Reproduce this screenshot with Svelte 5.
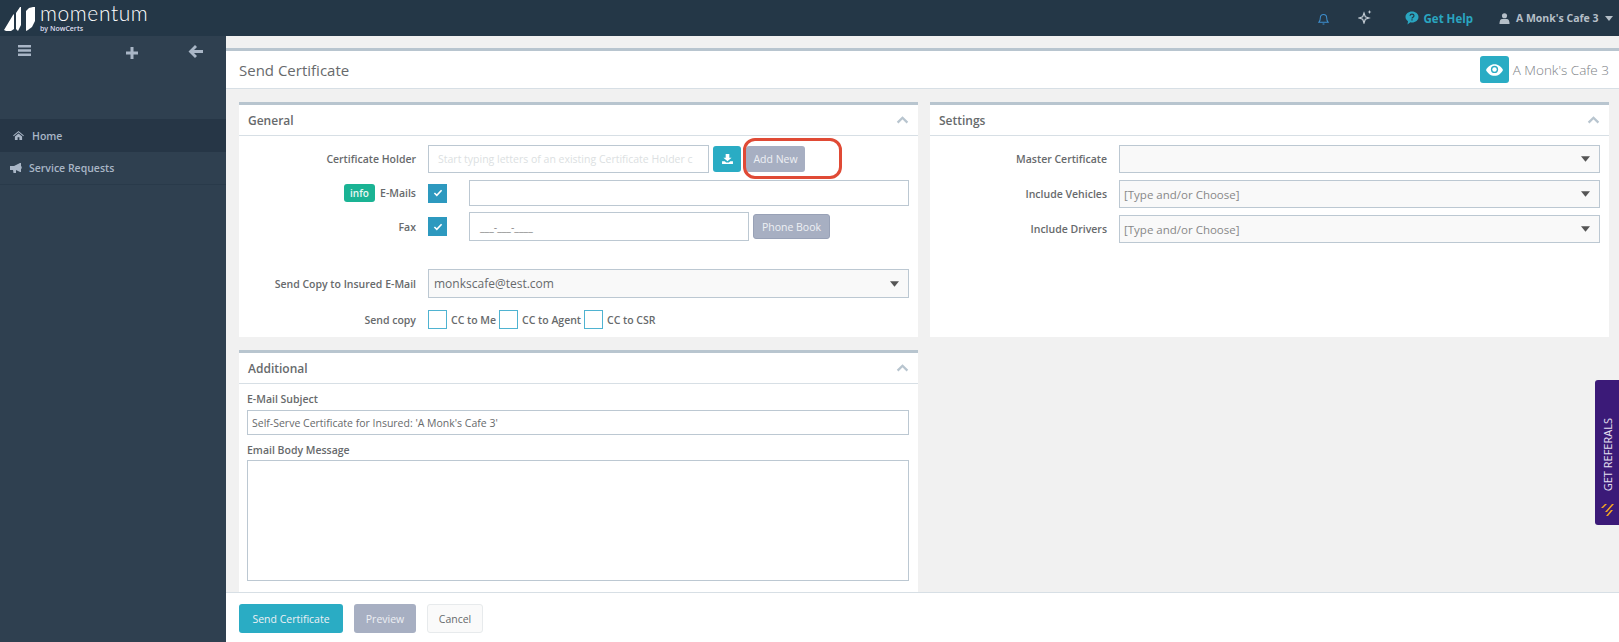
<script>
	const nav = [
		{ label: 'Home', icon: 'home', active: true },
		{ label: 'Service Requests', icon: 'bullhorn', active: false },
	]
	const settings = [
		{ label: 'Master Certificate', value: '' },
		{ label: 'Include Vehicles', value: '[Type and/or Choose]' },
		{ label: 'Include Drivers', value: '[Type and/or Choose]' },
	]
	const copies = ['CC to Me', 'CC to Agent', 'CC to CSR']
</script>

{#snippet caret()}
	<svg class="caret" viewBox="0 0 10 6" width="9" height="6"><path d="M0 0h10L5 6z" fill="#555" /></svg>
{/snippet}

{#snippet chevron()}
	<svg class="chevron" viewBox="0 0 14 9" width="13" height="8"><path d="M1.5 7.5 7 2l5.500 5.500" fill="none" stroke="#b8c5cf" stroke-width="2.600" /></svg>
{/snippet}

{#snippet check()}
	<span class="check on">
		<svg viewBox="0 0 12 10" width="10" height="8"><path d="M1.500 5 4.500 8l6-6.500" fill="none" stroke="#fff" stroke-width="2" /></svg>
	</span>
{/snippet}

<div class="app">
	<header class="topbar">
		<div class="logo">
			<svg viewBox="0 0 32 26" width="32" height="26" class="mark">
				<path d="M0 24 9 9 10 8v15l-3 2H2z M12 23V7l4-6 1 0v18l-2 4-1 2z" fill="#fff" />
				<path d="M22 21V5l3-3 4-1 2 0v14l-3 6-4 3-2 1z" fill="#fff" />
			</svg>
			<div class="wordmark">
				<span class="word">momentum</span>
				<span class="by">by NowCerts</span>
			</div>
		</div>
		<div class="top-right">
			<svg class="bell" viewBox="0 0 12 14" width="11" height="14"><path d="M1 10.500c1-1 1.500-2 1.500-4.500C2.500 3.500 4 2 6 2s3.500 1.500 3.500 4c0 2.500.5 3.500 1.500 4.500zM5 12.500h2" fill="none" stroke="#3d8fcf" stroke-width="1.100" /></svg>
			<svg class="sparkle" viewBox="0 0 14 14" width="14" height="14"><path d="M6 3 7.300 6.700 11 8 7.300 9.300 6 13 4.700 9.300 1 8l3.700-1.300z" fill="none" stroke="#c3ccd4" stroke-width="1.200" /><path d="M11.500 0l.6 1.400 1.400.6-1.400.6-.6 1.400-.6-1.400L9.500 2l1.400-.6z" fill="#c3ccd4" /></svg>
			<a class="help">
				<svg viewBox="0 0 14 14" width="14" height="14"><path d="M7 .500c3.600 0 6.500 2.400 6.500 5.500S10.600 11.500 7 11.500c-.6 0-1.100 0-1.600-.2L2.500 13.500l.5-3.300C1.400 9.200.5 7.700.5 6 .5 2.900 3.400.500 7 .500z" fill="#2aa5c0" /><path d="M5 4.800c.1-1 .9-1.600 2-1.600s2 .7 2 1.600c0 1.400-2 1.400-2 2.700M7 8.300v1.200" fill="none" stroke="#243747" stroke-width="1.200" /></svg>
				Get Help
			</a>
			<div class="user">
				<svg viewBox="0 0 12 12" width="11" height="11"><circle cx="6" cy="3" r="2.800" fill="#b5bfc8" /><path d="M.5 12c0-3.500 1-5.500 3-5.500h5c2 0 3 2 3 5.500z" fill="#b5bfc8" /></svg>
				A Monk's Cafe 3
				<svg viewBox="0 0 10 6" width="8" height="5"><path d="M0 0h10L5 6z" fill="#b5bfc8" /></svg>
			</div>
		</div>
	</header>

	<div class="body">
		<aside class="sidebar">
			<div class="tools">
				<svg viewBox="0 0 13 11" width="13" height="11"><path d="M0 0h13v2.500H0zM0 4.200h13v2.500H0zM0 8.400h13v2.500H0z" fill="#a9b6c6" /></svg>
				<svg class="plus" viewBox="0 0 12 12" width="12" height="12"><path d="M4.500 0h3v4.500H12v3H7.500V12h-3V7.500H0v-3h4.500z" fill="#a9b6c6" /></svg>
				<svg class="back" viewBox="0 0 15 13" width="15" height="13"><path d="M7 0l2 2-3 3h9v3H6l3 3-2 2-6.500-6.500z" fill="#a9b6c6" /></svg>
			</div>
			<nav>
				{#each nav as item}
					<a class="nav-item" class:active={item.active}>
						{#if item.icon === 'home'}
							<svg viewBox="0 0 12 10" width="11" height="9"><path d="M6 0 12 5l-.7.8L6 1.500.7 5.800 0 5zM2 6l4-3.300L10 6v4H7V7H5v3H2z" fill="#a9b6c6" /></svg>
						{:else}
							<svg viewBox="0 0 12 10" width="12" height="10"><path d="M0 3h4l6-3h1v9h-1L6 7v3H3.500L3 7H0zM11 3c1 .3 1 2.700 0 3z" fill="#a9b6c6" /></svg>
						{/if}
						{item.label}
					</a>
				{/each}
			</nav>
		</aside>

		<main class="main">
			<div class="title-bar">
				<h1>Send Certificate</h1>
				<div class="insured">
					<span class="eye">
						<svg viewBox="0 0 16 11" width="17" height="12"><path d="M8 0c3.500 0 6.500 2.300 8 5.500-1.500 3.200-4.500 5.500-8 5.500S1.500 8.700 0 5.500C1.500 2.300 4.500 0 8 0z" fill="#fff" /><circle cx="8" cy="5" r="3.400" fill="#2aacc4" /><circle cx="8" cy="5" r="2.100" fill="#fff" /></svg>
					</span>
					A Monk's Cafe 3
				</div>
			</div>

			<div class="columns">
				<div class="col">
					<section class="panel general">
						<div class="panel-head"><h2>General</h2>{@render chevron()}</div>
						<div class="form">
							<div class="row r-holder">
								<label>Certificate Holder</label>
								<div class="input holder placeholder">Start typing letters of an existing Certificate Holder c</div>
								<button class="btn teal icon-btn">
									<svg viewBox="0 0 12 11" width="11" height="10"><path d="M4 0h4v4h2.500L6 8 1.500 4H4zM0 8h3l1.500 1.300h3L9 8h3v3H0z" fill="#fff" /></svg>
								</button>
								<span class="ring-wrap">
									<button class="btn grey add">Add New</button>
									<span class="ring"></span>
								</span>
							</div>
							<div class="row r-email">
								<label><span class="badge">info</span>E-Mails</label>
								{@render check()}
								<div class="input email"></div>
							</div>
							<div class="row r-fax">
								<label>Fax</label>
								{@render check()}
								<div class="input fax">___-___-____</div>
								<button class="btn grey phone">Phone Book</button>
							</div>
							<div class="row r-copy">
								<label>Send Copy to Insured E-Mail</label>
								<div class="input select">monkscafe@test.com {@render caret()}</div>
							</div>
							<div class="row r-send">
								<label>Send copy</label>
								{#each copies as c}
									<span class="check"></span><span class="cc">{c}</span>
								{/each}
							</div>
						</div>
					</section>

					<section class="panel additional">
						<div class="panel-head"><h2>Additional</h2>{@render chevron()}</div>
						<div class="stack">
							<label>E-Mail Subject</label>
							<div class="input subject">Self-Serve Certificate for Insured: 'A Monk's Cafe 3'</div>
							<label>Email Body Message</label>
							<div class="input message"></div>
						</div>
					</section>
				</div>

				<div class="col">
					<section class="panel general">
						<div class="panel-head"><h2>Settings</h2>{@render chevron()}</div>
						<div class="settings">
							{#each settings as s}
								<div class="row s-row">
									<label>{s.label}</label>
									<div class="input combo">{s.value}{@render caret()}</div>
								</div>
							{/each}
						</div>
					</section>
				</div>
			</div>

			<footer class="actions">
				<button class="btn teal send">Send Certificate</button>
				<button class="btn grey preview">Preview</button>
				<button class="btn cancel">Cancel</button>
			</footer>
		</main>
	</div>

	<aside class="referrals">
		<svg viewBox="0 0 14 14" width="14" height="14"><path d="M1 5 5 1h2L3 5zM5 9l7-8h2l-7 8zM6 13l5-6h2l-5 6z" fill="#f5a623" /></svg>
		<span>GET REFERALS</span>
	</aside>
</div>

<style>
	:global(body) {
		overflow: hidden;
		font-family: 'Open Sans', 'Noto Sans', sans-serif;
		color: #676a6c;
	}
	.app {
		position: relative;
		height: 642px;
		width: 1619px;
		overflow: hidden;
		display: flex;
		flex-direction: column;
		background: #f1f1f1;
	}
	.topbar {
		height: 36px;
		flex: none;
		display: flex;
		justify-content: space-between;
		background: #243747;
	}
	.logo {
		display: flex;
		align-items: flex-start;
		padding: 6px 0 0 4px;
		gap: 4px;
	}
	.wordmark {
		display: flex;
		flex-direction: column;
		color: #fff;
		margin-top: -5px;
	}
	.word {
		font-family: 'Lato', sans-serif;
		font-weight: 300;
		font-size: 21px;
		line-height: 24px;
		letter-spacing: 0.6px;
	}
	.by {
		font-size: 7px;
		line-height: 8px;
		font-weight: 600;
		color: #dde;
	}
	.top-right {
		display: flex;
		align-items: center;
		height: 36px;
	}
	.bell {
		margin-right: 29px;
		margin-top: 1px;
	}
	.sparkle {
		margin-right: 33px;
		margin-top: -3px;
	}
	.help {
		display: flex;
		align-items: center;
		gap: 5px;
		font-size: 11.500px;
		font-weight: 700;
		color: #2aa5c0;
		margin-right: 16px;
	}
	.user {
		display: flex;
		align-items: center;
		gap: 6px;
		width: 130px;
		padding-left: 10px;
		box-sizing: border-box;
		font-size: 10.500px;
		font-weight: 700;
		color: #b5bfc8;
	}
	.body {
		flex: 1;
		display: flex;
		min-height: 0;
	}
	.sidebar {
		width: 226px;
		flex: none;
		background: #2f4050;
	}
	.tools {
		display: flex;
		align-items: flex-start;
		height: 83px;
		padding: 9px 0 0 18px;
		box-sizing: border-box;
	}
	.plus {
		margin: 2px 0 0 95px;
	}
	.back {
		margin: 0 0 0 50px;
	}
	.nav-item {
		display: flex;
		align-items: center;
		gap: 7px;
		height: 33px;
		padding-left: 10px;
		font-size: 10.500px;
		font-weight: 600;
		color: #a9b6c6;
		border-bottom: 1px solid #293a4a;
		box-sizing: border-box;
	}
	.nav-item.active {
		background: #263646;
		padding-left: 13px;
		gap: 8px;
		border-bottom: 0;
	}
	.main {
		flex: 1;
		min-width: 0;
		padding-top: 12px;
		display: flex;
		flex-direction: column;
	}
	.title-bar {
		height: 41px;
		flex: none;
		display: flex;
		align-items: center;
		justify-content: space-between;
		background: #fff;
		border-top: 3px solid #b8c5cf;
		border-bottom: 1px solid #d7dfe5;
		padding: 0 10px 0 13px;
		box-sizing: border-box;
	}
	h1 {
		margin: 0;
		font-size: 15px;
		font-weight: 400;
		color: #676a6c;
	}
	.insured {
		display: flex;
		align-items: center;
		gap: 4px;
		font-size: 13.500px;
		font-weight: 300;
		color: #7d8286;
	}
	.eye {
		width: 29px;
		height: 27px;
		border-radius: 3px;
		background: #2aacc4;
		display: flex;
		align-items: center;
		justify-content: center;
	}
	.columns {
		flex: none;
		height: 503px;
		display: grid;
		grid-template-columns: 679px 679px;
		gap: 12px;
		padding: 13px 0 0 13px;
		box-sizing: border-box;
	}
	.col {
		display: flex;
		flex-direction: column;
		gap: 13px;
	}
	.panel {
		background: #fff;
		border-top: 3px solid #b8c5cf;
		box-sizing: border-box;
	}
	.general {
		height: 235px;
	}
	.additional {
		height: 242px;
	}
	.panel-head {
		height: 30px;
		display: flex;
		align-items: center;
		justify-content: space-between;
		padding: 0 9px;
		border-bottom: 1px solid #d7dfe5;
	}
	h2 {
		margin: 0;
		font-size: 12px;
		font-weight: 600;
		color: #676a6c;
	}
	.row {
		display: flex;
		align-items: center;
	}
	label {
		font-size: 10.500px;
		font-weight: 600;
		color: #676a6c;
		white-space: nowrap;
	}
	.row > label {
		width: 177px;
		flex: none;
		margin-right: 12px;
		display: flex;
		justify-content: flex-end;
		align-items: center;
	}
	.form {
		padding-top: 9px;
	}
	.r-holder { height: 28px; }
	.r-email { height: 26px; margin-top: 7px; }
	.r-fax { height: 29px; margin-top: 6px; }
	.r-copy { height: 29px; margin-top: 28px; }
	.r-send { height: 19px; margin-top: 12px; }
	.input {
		border: 1px solid #bcc8d2;
		box-sizing: border-box;
		background: #fff;
		font-size: 10.500px;
		color: #676a6c;
		display: flex;
		align-items: center;
		height: 100%;
	}
	.holder {
		width: 281px;
		padding-left: 9px;
		color: #dcdfe2;
		white-space: nowrap;
		overflow: hidden;
	}
	.btn {
		border: 0;
		border-radius: 3px;
		font-family: inherit;
		font-size: 10.500px;
		font-weight: 400;
		color: #eef0f4;
		padding: 0;
	}
	.teal { background: #2aacc4; }
	.grey { background: #a7afc2; }
	.icon-btn {
		width: 28px;
		height: 26px;
		margin-left: 4px;
		display: flex;
		align-items: center;
		justify-content: center;
	}
	.ring-wrap {
		position: relative;
		margin-left: 5px;
		display: flex;
	}
	.add {
		width: 59px;
		height: 26px;
	}
	.ring {
		position: absolute;
		left: -3px;
		top: -8px;
		width: 99px;
		height: 41px;
		box-sizing: border-box;
		border: 3px solid #e04a35;
		border-radius: 12px;
	}
	.check {
		width: 19px;
		height: 19px;
		flex: none;
		box-sizing: border-box;
		border: 1px solid #4fb3d1;
		background: #fff;
		display: flex;
		align-items: center;
		justify-content: center;
	}
	.check.on {
		background: #2d99bf;
		border-color: #2d99bf;
	}
	.badge {
		background: #1ab394;
		color: #e9f8f5;
		font-size: 10px;
		font-weight: 600;
		border-radius: 3px;
		width: 31px;
		height: 18px;
		display: flex;
		align-items: center;
		justify-content: center;
		margin-right: 5px;
	}
	.email {
		width: 440px;
		margin-left: 22px;
	}
	.fax {
		width: 280px;
		margin-left: 22px;
		padding-left: 10px;
		color: #888;
	}
	.phone {
		width: 77px;
		height: 25px;
		margin-left: 4px;
		border: 1px solid #98a1b6;
		box-sizing: border-box;
	}
	.select, .combo {
		background: #f9f9f9;
		justify-content: space-between;
	}
	.select {
		width: 481px;
		padding: 0 9px 0 5px;
		font-size: 12px;
	}
	.cc {
		font-size: 10.500px;
		font-weight: 600;
		margin: 0 3px 0 4px;
	}
	.stack {
		padding: 8px 9px 0 8px;
		display: flex;
		flex-direction: column;
	}
	.subject {
		height: 25px;
		margin-top: 4px;
		padding-left: 4px;
		flex: none;
	}
	.stack label + .input.message {
		margin-top: 3px;
	}
	.stack .subject + label {
		margin-top: 8px;
	}
	.message {
		height: 121px;
		flex: none;
		margin-top: 3px;
	}
	.settings {
		padding: 9px 9px 0 0;
		display: flex;
		flex-direction: column;
		gap: 7px;
	}
	.s-row {
		height: 28px;
	}
	.combo {
		flex: 1;
		padding: 0 9px 0 4px;
		color: #888;
		font-size: 11.500px;
	}
	.s-row .combo {
		height: 28px;
	}
	.combo :global(svg) {
		margin-left: auto;
	}
	.actions {
		flex: 1;
		background: #fff;
		border-top: 1px solid #d7dfe5;
		padding: 11px 0 0 13px;
		display: flex;
		align-items: flex-start;
		gap: 11px;
	}
	.send {
		width: 104px;
		height: 29px;
	}
	.preview {
		width: 62px;
		height: 29px;
	}
	.cancel {
		width: 56px;
		height: 29px;
		background: #fafafa;
		border: 1px solid #e7eaec;
		color: #676a6c;
	}
	.referrals {
		position: absolute;
		right: 0;
		top: 380px;
		width: 24px;
		height: 145px;
		box-sizing: border-box;
		background: #3b1a78;
		border-radius: 3px 0 0 3px;
		display: flex;
		flex-direction: column-reverse;
		align-items: center;
		justify-content: flex-start;
		gap: 12px;
		padding: 8px 0 8px 0;
		color: #e6e0f2;
		font-size: 11px;
	}
	.referrals span {
		writing-mode: vertical-rl;
		transform: rotate(180deg);
		white-space: nowrap;
	}
</style>
